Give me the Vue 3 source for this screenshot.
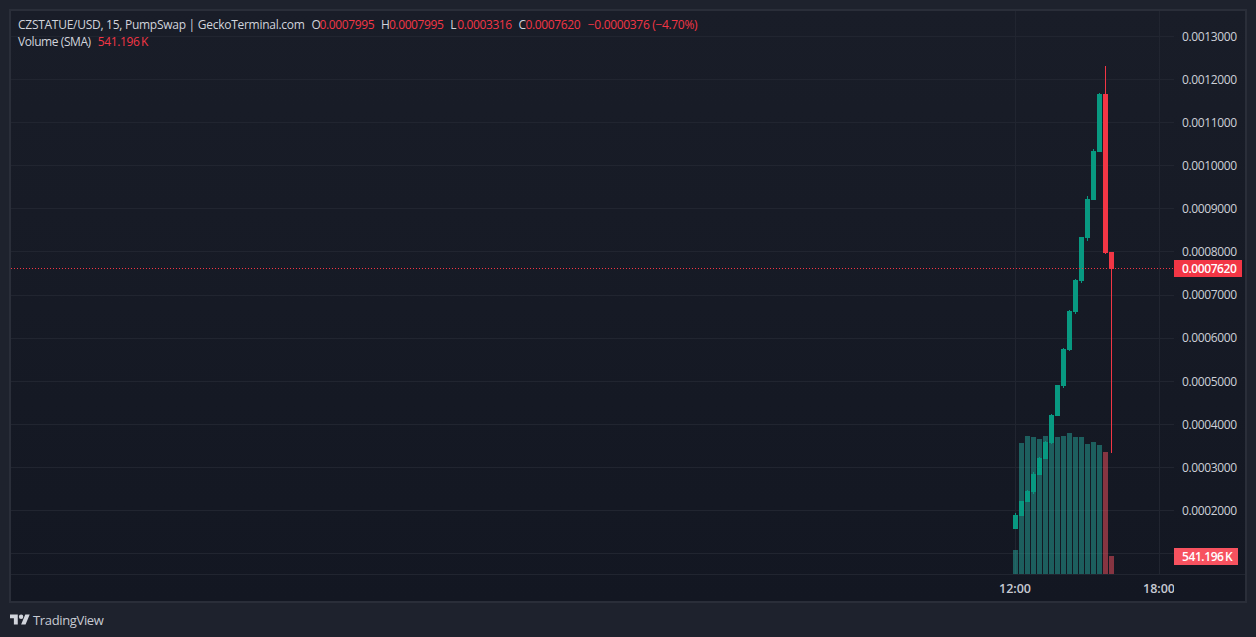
<script setup>
const prices = ['0.0013000','0.0012000','0.0011000','0.0010000','0.0009000','0.0008000','0.0007000','0.0006000','0.0005000','0.0004000','0.0003000','0.0002000']
const gridY = [36,79,122,165,208,251,295,338,381,424,467,510,553]
const gridX = [1015,1159]
const up = '#089981'
const down = '#f23645'
const candles = [
  [515,529,513,529,up],[501,516,501,516,up],[491,502,490,502,up],[474,492,472,494,up],
  [458,475,457,475,up],[442,459,441,459,up],[415,443,414,444,up],[385,416,385,416,up],
  [349,386,348,388,up],[311,350,310,351,up],[280,312,279,314,up],[237,281,237,283,up],
  [199,238,196,241,up],[151,200,149,200,up],[94,152,93,152,up],[94,253,66,254,down],[252,269,252,453,down]
].map((c,i)=>({x:1013+6*i,top:c[0],bottom:c[1],wickTop:c[2],wickBottom:c[3],color:c[4]}))
const volumes = [550,443,436,437,439,436,436,437,436,433,437,437,444,442,445,452,556]
  .map((top,i)=>({x:1013+6*i,top,color:i<15?'rgba(38,166,154,.5)':'rgba(247,82,95,.5)'}))
const ohlc = [['O','0.0007995',''],['H','0.0007995',''],['L','0.0003316','narrow'],['C','0.0007620','narrow']]
</script>

<template>
  <div class="page">
    <div class="frame">
      <div class="pane">
        <svg class="plot" width="1163" height="563" viewBox="11 11 1163 563" shape-rendering="crispEdges">
          <line v-for="y in gridY" :key="'h'+y" x1="11" x2="1174" :y1="y+0.5" :y2="y+0.5" class="grid"/>
          <line v-for="x in gridX" :key="'v'+x" y1="11" y2="574" :x1="x+0.5" :x2="x+0.5" class="grid"/>
          <rect v-for="v in volumes" :key="'v'+v.x" :x="v.x" :y="v.top" width="5" :height="574-v.top" :fill="v.color"/>
          <g v-for="c in candles" :key="c.x">
            <rect :x="c.x+2" :y="c.wickTop" width="1" :height="c.wickBottom-c.wickTop" :fill="c.color"/>
            <rect :x="c.x" :y="c.top" width="5" :height="c.bottom-c.top" :fill="c.color"/>
          </g>
          <line x1="11" x2="1174" y1="268.5" y2="268.5" stroke="#f23645" stroke-dasharray="1 2"/>
        </svg>
        <div class="legend">
          <div class="row">
            <span class="title main">CZSTATUE/USD, 15, PumpSwap | GeckoTerminal.com</span>
            <span v-for="o in ohlc" :key="o[0]" class="pair"><span class="k" :class="o[2]">{{ o[0] }}</span><span class="v">{{ o[1] }}</span></span>
            <span class="v change">−0.0000376 (−4.70%)</span>
          </div>
          <div class="row second">
            <span class="title">Volume (SMA)</span>
            <span class="v vol">541.196&#8201;K</span>
          </div>
        </div>
      </div>
      <div class="price-axis">
        <div v-for="p in prices" :key="p" class="price">{{ p }}</div>
        <div class="tag last">0.0007620</div>
        <div class="tag volume">541.196&#8201;K</div>
      </div>
      <div class="time-axis">
        <span class="time">12:00</span>
        <span class="time">18:00</span>
      </div>
      <div class="corner"></div>
    </div>
    <div class="footer">
      <svg class="logo" width="20" height="16" viewBox="0 0 36 28" fill="#d1d4dc">
        <path d="M14 22H7V11H0V4h14v18zM28 22h-8l7.5-18h8L28 22z"/>
        <circle cx="20" cy="8" r="4"/>
      </svg>
      <span class="brand">TradingView</span>
    </div>
  </div>
</template>

<style scoped>
.page {
  width: 1256px;
  height: 637px;
  background: #1e222d;
  display: flex;
  flex-direction: column;
  font-family: "Open Sans", "Liberation Sans", sans-serif;
  overflow: hidden;
}
.frame {
  margin: 9px 9px 0;
  width: 1238px;
  height: 594px;
  box-sizing: border-box;
  border: 2px solid #2a2e39;
  display: grid;
  grid-template-columns: 1163px 71px;
  grid-template-rows: 563px 27px;
  background: linear-gradient(#191d28, #131722);
}
.pane { position: relative; overflow: hidden; }
.plot { display: block; }
.grid { stroke: #212530; stroke-width: 1; }
.legend {
  position: absolute;
  left: 7px;
  top: 5px;
  font-size: 12px;
  line-height: 17px;
  color: #d1d4dc;
}
.row { display: flex; white-space: nowrap; }
.title { margin-right: 7px; letter-spacing: -0.42px; }
.title.main { letter-spacing: -0.27px; }
.pair { display: flex; margin-right: 6.7px; }
.k { width: 8px; }
.k.narrow { width: 7px; }
.v { color: #f23645; letter-spacing: -0.38px; }
.change { margin-left: 1px; letter-spacing: -0.33px; }
.price-axis {
  position: relative;
  padding-top: 3.5px;
  display: flex;
  flex-direction: column;
}
.price {
  height: 43.14px;
  flex: none;
  display: flex;
  align-items: center;
  padding-left: 8px;
  font-size: 12px;
  letter-spacing: -0.38px;
  color: #cdd0d8;
}
.tag {
  position: absolute;
  left: 0;
  height: 17px;
  line-height: 17px;
  font-size: 12px;
  font-weight: 600;
  letter-spacing: -0.42px;
  color: #fff;
  padding-left: 8px;
  box-sizing: border-box;
}
.last { top: 249px; width: 68px; background: #f23645; }
.volume { top: 537px; width: 64px; background: #f7525f; }
.time-axis {
  border-top: 1px solid #212530;
  box-sizing: border-box;
  display: flex;
  gap: 104px;
  padding-left: 984px;
  align-items: center;
  overflow: hidden;
  color: #c7cad2;
  font-size: 12.5px;
  font-weight: 600;
}
.time { width: 40px; flex: none; text-align: center; }
.corner { border-top: 1px solid #212530; }
.footer {
  flex: 1;
  display: flex;
  align-items: center;
  padding-left: 10px;
  gap: 3px;
}
.logo { display: block; }
.brand { font-size: 13px; letter-spacing: -0.35px; color: #c7cad2; }
</style>
